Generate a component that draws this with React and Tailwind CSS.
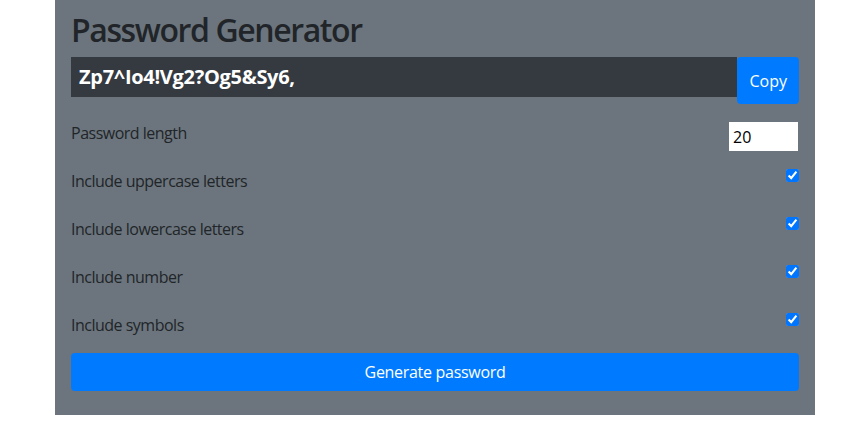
import { useState } from "react";

const options = [
  "Include uppercase letters",
  "Include lowercase letters",
  "Include number",
  "Include symbols",
];

export default function App() {
  const [length, setLength] = useState(20);
  const [checks, setChecks] = useState([true, true, true, true]);

  return (
    <div className="w-[856px] h-[440px] bg-white font-['Segoe_UI','Open_Sans',sans-serif]">
      <div className="ml-[55px] w-[760px] bg-[#6c757d] px-4 pt-[11px] pb-6 text-[#212529]">
        <h2 className="text-[32px] leading-[1.2] font-semibold tracking-[-1.4px] mb-2">
          Password Generator
        </h2>

        {/* Result */}
        <div className="flex items-start">
          <div className="flex-1 h-10 bg-[#343a40] flex items-center px-2">
            <span className="text-white font-bold text-[20px] tracking-[-0.3px]">
              Zp7^Io4!Vg2?Og5&amp;Sy6,
            </span>
          </div>
          <button className="h-[47px] px-3 bg-[#007bff] text-white text-base rounded">
            Copy
          </button>
        </div>

        {/* Settings */}
        <div className="mt-[17px] flex justify-between items-start h-8 mb-4">
          <label className="leading-6 text-base tracking-[-0.5px]">Password length</label>
          <input
            type="number"
            value={length}
            onChange={(e) => setLength(e.target.value)}
            className="w-[69px] h-[29px] mt-px mr-px bg-white text-black px-1 outline-none"
          />
        </div>
        {options.map((opt, i) => (
          <div
            key={opt}
            className={`flex justify-between items-start h-8 ${i === options.length - 1 ? "mb-2" : "mb-4"}`}
          >
            <label className="leading-6 text-base tracking-[-0.5px]">{opt}</label>
            <input
              type="checkbox"
              checked={checks[i]}
              onChange={() =>
                setChecks(checks.map((c, j) => (j === i ? !c : c)))
              }
              className="w-[13px] h-[13px] m-0 accent-[#0075ff]"
            />
          </div>
        ))}

        <button className="w-full h-[38px] bg-[#007bff] text-white text-base rounded tracking-[-0.3px]">
          Generate password
        </button>
      </div>
    </div>
  );
}
